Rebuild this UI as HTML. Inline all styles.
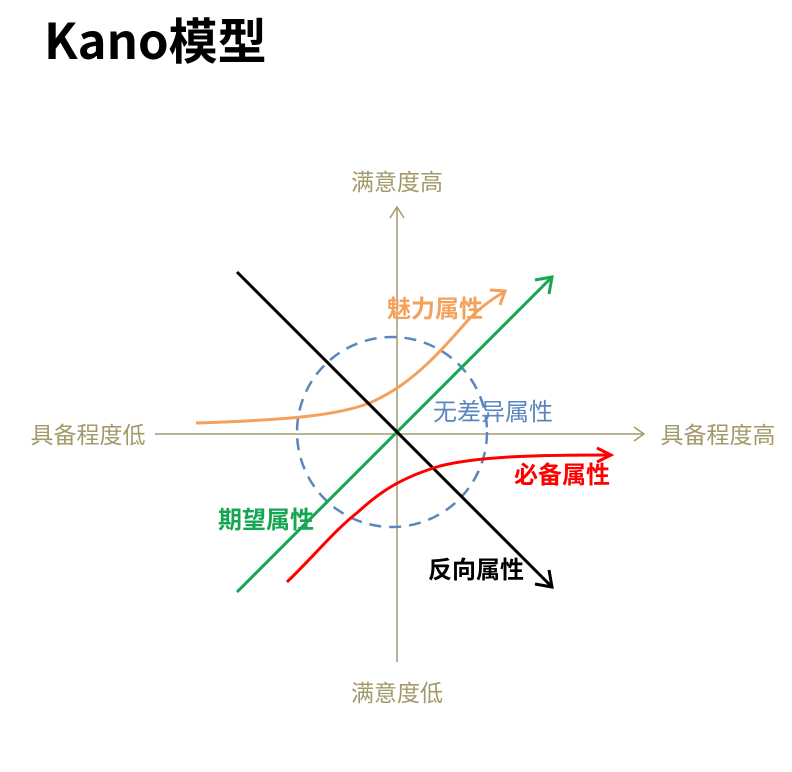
<!DOCTYPE html>
<html><head><meta charset="utf-8"><style>
body{margin:0;width:792px;height:772px;background:#fff;overflow:hidden;position:relative;font-family:"Liberation Sans","Noto Sans CJK SC",sans-serif}
.t{position:absolute;left:44px;top:3px;font-family:"Noto Sans CJK SC",sans-serif;font-weight:700;font-size:49px;line-height:72px;color:#000}
</style></head><body>
<div class="t">Kano模型</div>
<svg width="792" height="772" style="position:absolute;left:0;top:0" font-family="Noto Sans CJK SC, sans-serif">
<g stroke="#a39a6c" stroke-width="1.5" fill="none">
<line x1="155" y1="434" x2="644" y2="434"/>
<polyline points="634,427 644,434 634,441"/>
<line x1="397" y1="662" x2="397" y2="207"/>
<polyline points="390,218 397,207 404,218"/>
</g>
<g fill="#a39a6c" font-size="23" text-anchor="middle">
<text x="397" y="190">满意度高</text>
<text x="397" y="701">满意度低</text>
<text x="88" y="443">具备程度低</text>
<text x="718" y="443">具备程度高</text>
</g>
<ellipse cx="392" cy="432" rx="95" ry="95" fill="none" stroke="#5b86bd" stroke-width="2.5" stroke-dasharray="12,8"/>
<path d="M196,423 C290,420 350,415 380,398 C420,378 450,340 470,318 C480,308 490,300 504,292" fill="none" stroke="#f4a15c" stroke-width="3"/>
<polyline points="490,290 505,291 500,305" fill="none" stroke="#f4a15c" stroke-width="3"/>
<line x1="237" y1="592" x2="551" y2="278" stroke="#16a553" stroke-width="3"/>
<polyline points="535,280 552,277 549,294" fill="none" stroke="#16a553" stroke-width="3"/>
<line x1="237" y1="272" x2="551" y2="586" stroke="#000" stroke-width="3"/>
<polyline points="535,584 552,587 549,570" fill="none" stroke="#000" stroke-width="3"/>
<path d="M287,582 C315,555 335,530 358,512 C380,492 400,478 440,466 C480,456 540,455 610,455" fill="none" stroke="#f00" stroke-width="3"/>
<polyline points="597,448 611,455 597,462" fill="none" stroke="#f00" stroke-width="3"/>
<g font-size="24" font-weight="700">
<text x="387" y="317" fill="#f4a15c">魅力属性</text>
<text x="433" y="420" fill="#5b86bd" font-weight="400">无差异属性</text>
<text x="514" y="483" fill="#f00">必备属性</text>
<text x="218" y="528" fill="#16a553">期望属性</text>
<text x="428" y="578" fill="#000">反向属性</text>
</g>
</svg>
</body></html>
